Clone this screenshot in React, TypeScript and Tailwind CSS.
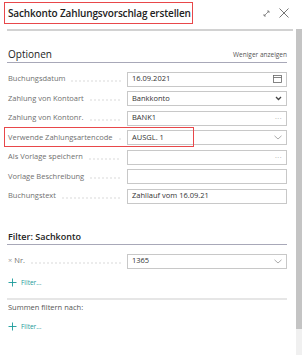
import React from "react";

const font = { fontFamily: '"Open Sans", "Noto Sans", sans-serif' };

function Leader() {
  return (
    <div className="flex-1 ml-[5px] mr-[3px] mt-[3px] h-[2px] bg-[radial-gradient(circle,#c2c2c2_0.5px,transparent_0.8px)] bg-[length:4px_2px] bg-repeat-x" />
  );
}

function Row({
  label,
  value,
  icon,
  highlight,
  xMark,
}: {
  label: string;
  value?: string;
  icon?: React.ReactNode;
  highlight?: boolean;
  xMark?: boolean;
}) {
  return (
    <div className="relative flex items-center h-[15px]">
      <div className="flex items-center w-[119px] h-full text-[7.5px] text-[#707070] pr-[3px]">
        {xMark && <span className="mr-[2px] text-[#a0a0a0]">×</span>}
        <span className="whitespace-nowrap">{label}</span>
        <Leader />
      </div>
      <div className="flex items-center w-[160px] h-[15px] border border-[#c8c8c8] bg-white px-[4px]">
        <span className="flex-1 text-[7.5px] text-[#333]">{value}</span>
        <span className="flex items-center text-[#666]">{icon}</span>
      </div>
      {highlight && (
        <div className="absolute left-[-4px] top-[-3px] w-[190px] h-[20px] border-[1.5px] border-[#e8474a]" />
      )}
    </div>
  );
}

const Calendar = (
  <svg width="9" height="8" viewBox="0 0 9 8" fill="none" stroke="#666" strokeWidth="0.8">
    <rect x="0.5" y="0.5" width="8" height="7" />
    <line x1="0.5" y1="2.5" x2="8.5" y2="2.5" />
  </svg>
);
const ChevronBold = (
  <svg width="7" height="5" viewBox="0 0 7 5" fill="none" stroke="#444" strokeWidth="1.3">
    <polyline points="1,1 3.5,3.5 6,1" />
  </svg>
);
const ChevronLight = (
  <svg width="8" height="5" viewBox="0 0 8 5" fill="none" stroke="#888" strokeWidth="0.7">
    <polyline points="0.5,0.8 4,4 7.5,0.8" />
  </svg>
);
const Dots = <span className="text-[7px] text-[#999] leading-none tracking-[0.5px]">···</span>;

function AddFilter() {
  return (
    <div className="flex items-center h-[12px] text-[#1a9a9a]">
      <svg width="9" height="9" viewBox="0 0 9 9" stroke="#1a9a9a" strokeWidth="0.9">
        <line x1="4.5" y1="0.5" x2="4.5" y2="8.5" />
        <line x1="0.5" y1="4.5" x2="8.5" y2="4.5" />
      </svg>
      <span className="ml-[4px] text-[6.5px]">Filter...</span>
    </div>
  );
}

export default function App() {
  return (
    <div className="w-[302px] h-[355px] bg-white overflow-hidden flex flex-col" style={font}>
      {/* header */}
      <div className="flex items-start h-[29px] shrink-0">
        <div className="ml-[4px] mt-[2px] h-[22px] w-[189px] border-[1.5px] border-[#e8474a] flex items-center pl-[3px] overflow-hidden">
          <span className="text-[10px] font-semibold text-[#222] whitespace-nowrap tracking-[-0.15px]">
            Sachkonto Zahlungsvorschlag erstellen
          </span>
        </div>
        <div className="flex-1" />
        <div className="flex items-center gap-[9px] mt-[8px] mr-[13px]">
          <svg width="7" height="7" viewBox="0 0 7 7" fill="none" stroke="#777" strokeWidth="0.8">
            <line x1="1" y1="6" x2="6" y2="1" />
            <polyline points="1,4 1,6 3,6" />
            <polyline points="4,1 6,1 6,3" />
          </svg>
          <svg width="10" height="10" viewBox="0 0 10 10" fill="none" stroke="#666" strokeWidth="0.9">
            <line x1="0.5" y1="0.5" x2="9.5" y2="9.5" />
            <line x1="9.5" y1="0.5" x2="0.5" y2="9.5" />
          </svg>
        </div>
      </div>
      <div className="flex flex-1 min-h-0">
        <div className="flex-1 flex flex-col">
          <div className="ml-[7px] mr-[3px] h-[2px] bg-[#d2d2d2]" />
          <div className="pl-[8px] pr-[9px] flex flex-col">
            {/* Optionen */}
            <div className="flex items-end justify-between mt-[14px] h-[15px] pb-[1px]">
              <span className="text-[10px] text-[#222] leading-none">Optionen</span>
              <span className="text-[6.5px] text-[#555] leading-none mb-[1px]">Weniger anzeigen</span>
            </div>
            <div className="mt-[2px] h-[1px] bg-[#a8a8b8] -ml-[1px]" />
            <div className="flex flex-col gap-[4.5px] mt-[8.5px]">
              <Row label="Buchungsdatum" value="16.09.2021" icon={Calendar} />
              <Row label="Zahlung von Kontoart" value="Bankkonto" icon={ChevronBold} />
              <Row label="Zahlung von Kontonr." value="BANK1" icon={Dots} />
              <Row label="Verwende Zahlungsartencode" value="AUSGL. 1" icon={ChevronLight} highlight />
              <Row label="Als Vorlage speichern" value="" icon={Dots} />
              <Row label="Vorlage Beschreibung" value="" />
              <Row label="Buchungstext" value="Zahllauf vom 16.09.21" />
            </div>
            {/* Filter */}
            <div className="mt-[27px] h-[12px] flex items-center">
              <span className="text-[9px] font-semibold text-[#222]">Filter: Sachkonto</span>
            </div>
            <div className="mt-[1px] h-[1px] bg-[#a8a8b8] -ml-[1px]" />
            <div className="mt-[9px]">
              <Row label="Nr." value="1365" icon={ChevronLight} xMark />
            </div>
            <div className="mt-[8px]">
              <AddFilter />
            </div>
            <div className="mt-[9px] h-[2px] bg-[#e6e6e6] -ml-[1px]" />
            <div className="mt-[2px] h-[12px] flex items-center">
              <span className="text-[7.5px] text-[#555]">Summen filtern nach:</span>
            </div>
            <div className="mt-[7px]">
              <AddFilter />
            </div>
          </div>
        </div>
        <div className="w-[7px] flex flex-col">
          <div className="h-[300px] bg-[#c4c4c4]" />
          <div className="flex-1 bg-[#f0f0f0]" />
        </div>
      </div>
    </div>
  );
}
